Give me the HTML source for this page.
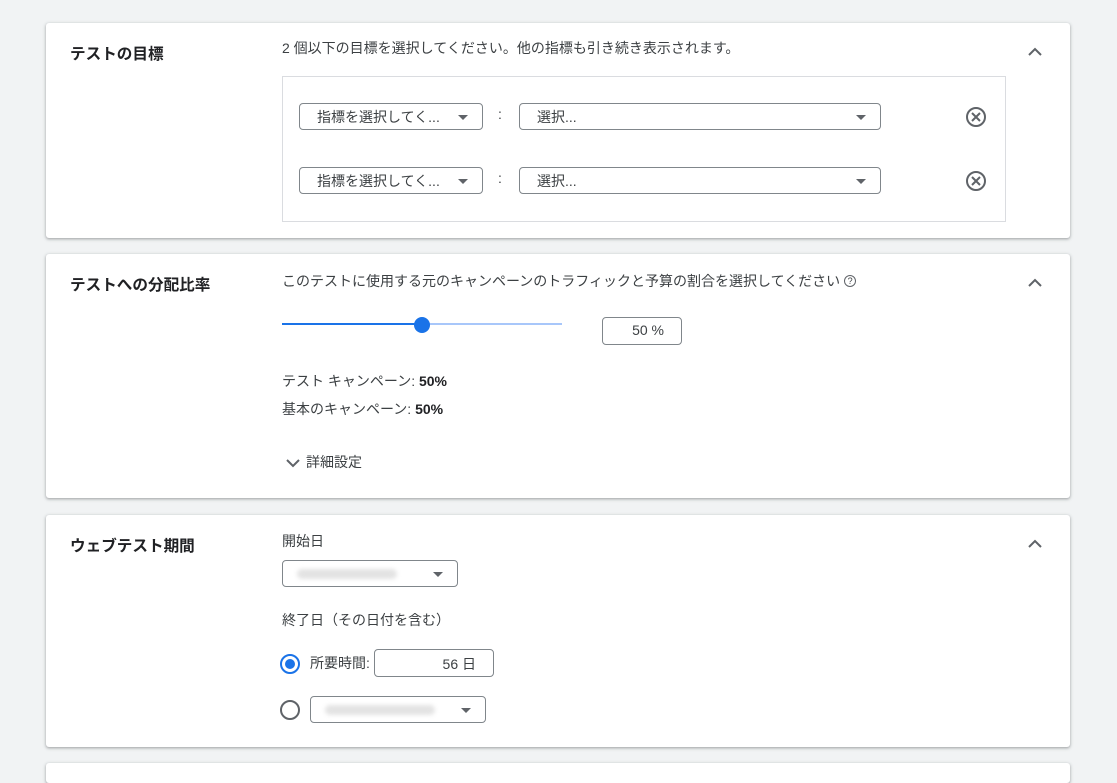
<!DOCTYPE html>
<html><head><meta charset="utf-8"><style>
*{box-sizing:border-box;margin:0;padding:0}
body{width:1117px;height:764px;background:#f1f3f4;font-family:"Liberation Sans","Noto Sans CJK JP",sans-serif;color:#3c4043;font-size:14px;position:relative;overflow:hidden}
.card{position:absolute;left:46px;width:1024px;background:#fff;border-radius:3px;box-shadow:0 1px 2px rgba(60,64,67,.3),0 1px 3px 1px rgba(60,64,67,.15)}
.a{position:absolute;white-space:nowrap}
.title{font-weight:bold;font-size:15.6px;color:#202124;left:24px}
.chev{position:absolute;right:26px;width:18px;height:18px}
.sel{position:absolute;border:1px solid #80868b;border-radius:4px;height:27px;background:#fff}
.sel span{position:absolute;left:17px;top:3px;font-size:14px;color:#3c4043}
.tri{position:absolute;width:0;height:0;border-left:5px solid transparent;border-right:5px solid transparent;border-top:5px solid #5f6368;top:11px}
.blur{position:absolute;left:14px;top:8px;height:10px;background:#e3e3e3;border-radius:5px;filter:blur(2px)}
</style></head><body>
<div class="card" style="top:23px;height:215px">
 <div class="a title" style="top:19px">テストの目標</div>
 <div class="a" style="left:236px;top:15px">2 個以下の目標を選択してください。他の指標も引き続き表示されます。</div>
 <svg class="chev" style="top:20px" viewBox="0 0 18 18"><path d="M3 12l6-6 6 6" fill="none" stroke="#5f6368" stroke-width="2"/></svg>
 <div class="a" style="left:236px;top:53px;width:724px;height:146px;border:1px solid #dadce0"></div>
 <div class="sel" style="left:253px;top:80px;width:184px"><span>指標を選択してく...</span><div class="tri" style="left:158px"></div></div>
 <div class="a" style="left:452px;top:83px">:</div>
 <div class="sel" style="left:473px;top:80px;width:362px"><span>選択...</span><div class="tri" style="left:336px"></div></div>
 <svg class="a" style="left:919px;top:83px" width="22" height="22" viewBox="0 0 22 22"><circle cx="11" cy="11" r="9" fill="none" stroke="#5f6368" stroke-width="2"/><path d="M7 7l8 8M15 7l-8 8" stroke="#5f6368" stroke-width="2"/></svg>
 <div class="sel" style="left:253px;top:144px;width:184px"><span>指標を選択してく...</span><div class="tri" style="left:158px"></div></div>
 <div class="a" style="left:452px;top:147px">:</div>
 <div class="sel" style="left:473px;top:144px;width:362px"><span>選択...</span><div class="tri" style="left:336px"></div></div>
 <svg class="a" style="left:919px;top:147px" width="22" height="22" viewBox="0 0 22 22"><circle cx="11" cy="11" r="9" fill="none" stroke="#5f6368" stroke-width="2"/><path d="M7 7l8 8M15 7l-8 8" stroke="#5f6368" stroke-width="2"/></svg>
</div>
<div class="card" style="top:254px;height:244px">
 <div class="a title" style="top:19px">テストへの分配比率</div>
 <div class="a" style="left:236px;top:17px">このテストに使用する元のキャンペーンのトラフィックと予算の割合を選択してください <span style="display:inline-block;width:12px;height:12px;border:1.3px solid #5f6368;border-radius:50%;font-size:9px;line-height:10px;text-align:center;vertical-align:2px">?</span></div>
 <svg class="chev" style="top:20px" viewBox="0 0 18 18"><path d="M3 12l6-6 6 6" fill="none" stroke="#5f6368" stroke-width="2"/></svg>
 <div class="a" style="left:236px;top:69px;width:140px;height:2px;background:#1a73e8"></div>
 <div class="a" style="left:376px;top:69px;width:140px;height:2px;background:#a8c7fa"></div>
 <div class="a" style="left:368px;top:63px;width:16px;height:16px;border-radius:50%;background:#1a73e8"></div>
 <div class="a" style="left:556px;top:63px;width:80px;height:28px;border:1px solid #80868b;border-radius:4px;text-align:right;padding:4px 17px 0 0">50 %</div>
 <div class="a" style="left:236px;top:117px">テスト キャンペーン: <b style="color:#202124">50%</b></div>
 <div class="a" style="left:236px;top:145px">基本のキャンペーン: <b style="color:#202124">50%</b></div>
 <svg class="a" style="left:239px;top:203px" width="16" height="12" viewBox="0 0 16 12"><path d="M2 3l6 6 6-6" fill="none" stroke="#5f6368" stroke-width="2"/></svg>
 <div class="a" style="left:260px;top:198px">詳細設定</div>
</div>
<div class="card" style="top:515px;height:232px">
 <div class="a title" style="top:19px">ウェブテスト期間</div>
 <div class="a" style="left:236px;top:16px">開始日</div>
 <svg class="chev" style="top:20px" viewBox="0 0 18 18"><path d="M3 12l6-6 6 6" fill="none" stroke="#5f6368" stroke-width="2"/></svg>
 <div class="sel" style="left:236px;top:45px;width:176px"><div class="blur" style="width:100px"></div><div class="tri" style="left:150px"></div></div>
 <div class="a" style="left:236px;top:95px">終了日（その日付を含む）</div>
 <div class="a" style="left:234px;top:139px;width:20px;height:20px;border:2px solid #1a73e8;border-radius:50%"><div style="position:absolute;left:3px;top:3px;width:10px;height:10px;border-radius:50%;background:#1a73e8"></div></div>
 <div class="a" style="left:264px;top:138px">所要時間:</div>
 <div class="a" style="left:328px;top:134px;width:120px;height:28px;border:1px solid #80868b;border-radius:4px;text-align:right;padding:4px 17px 0 0">56 日</div>
 <div class="a" style="left:234px;top:185px;width:20px;height:20px;border:2px solid #5f6368;border-radius:50%"></div>
 <div class="sel" style="left:264px;top:181px;width:176px"><div class="blur" style="left:14px;width:110px"></div><div class="tri" style="left:150px"></div></div>
</div>
<div class="card" style="top:763px;height:20px"></div>
</body></html>
